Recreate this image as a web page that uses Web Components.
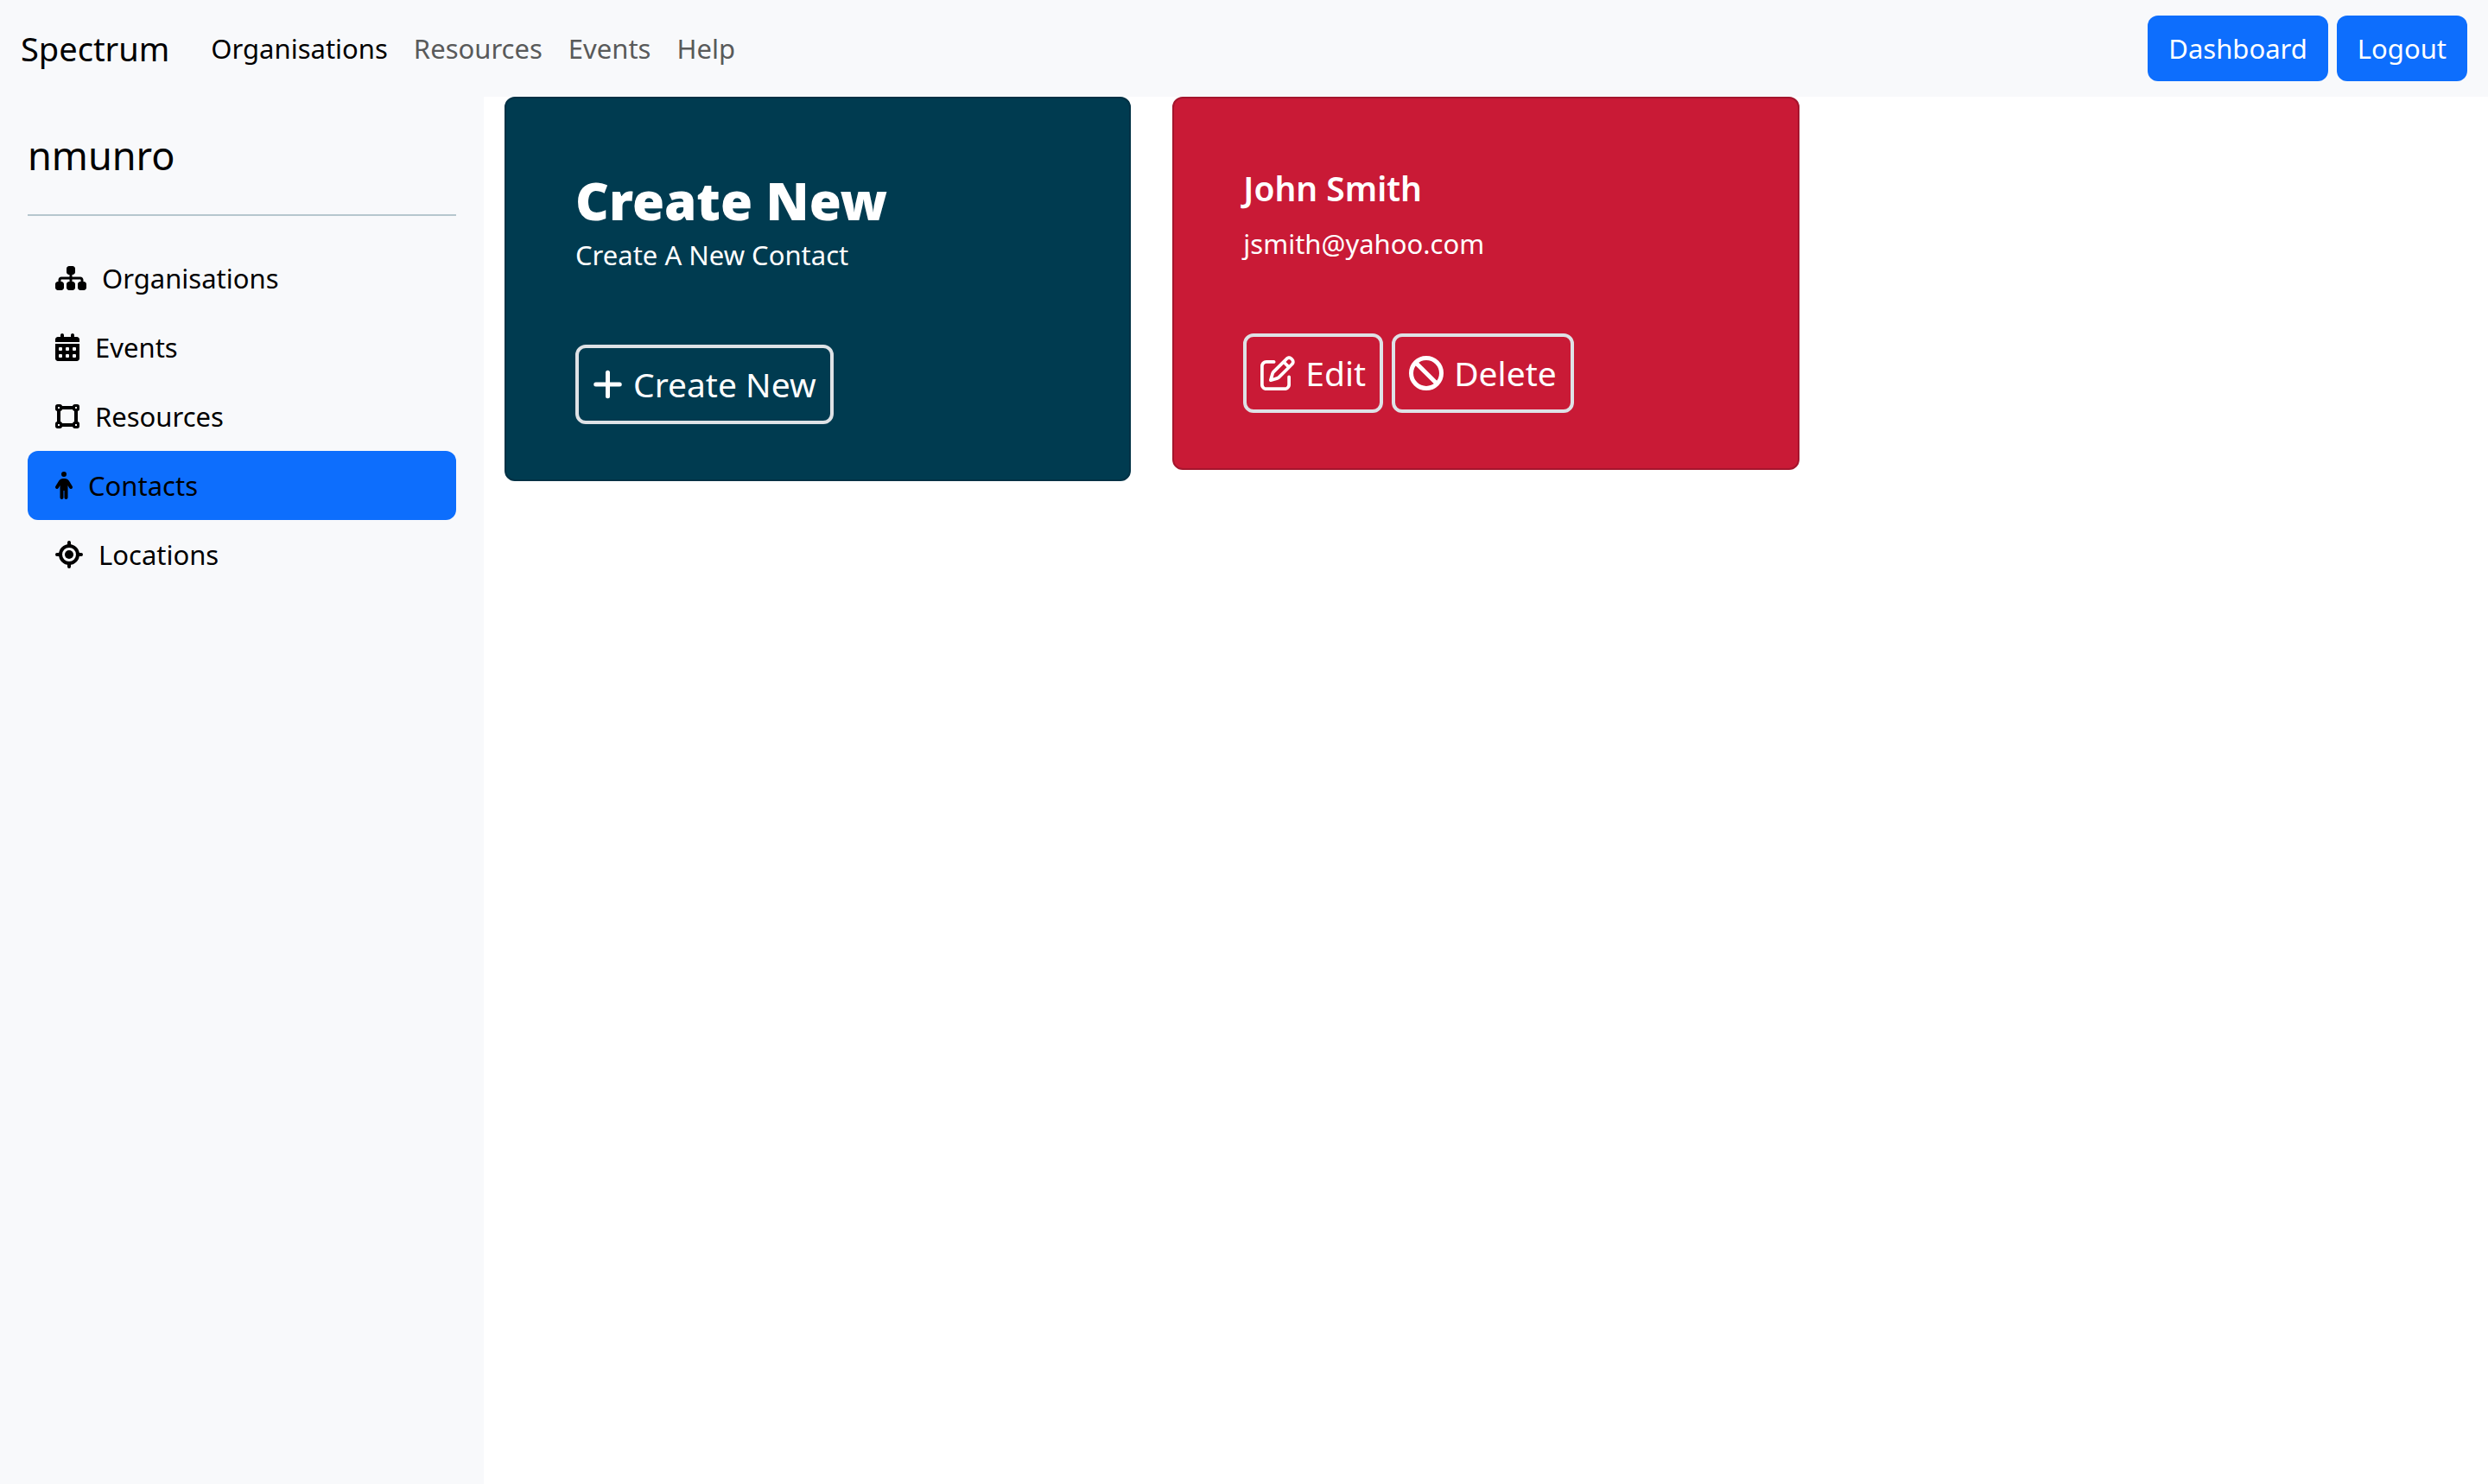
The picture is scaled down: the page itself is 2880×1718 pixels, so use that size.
<!DOCTYPE html>
<html lang="en">
<head>
<meta charset="utf-8">
<title>Spectrum</title>
<style>
  body { margin: 0; background: #fff; color: #000; font: 31px/48px "Noto Sans", "Open Sans", sans-serif; }
</style>
</head>
<body>
<spectrum-app>
  <spectrum-navbar slot="navbar">
    <nav-link active>Organisations</nav-link>
    <nav-link>Resources</nav-link>
    <nav-link>Events</nav-link>
    <nav-link>Help</nav-link>
    <action-button slot="actions">Dashboard</action-button>
    <action-button slot="actions">Logout</action-button>
  </spectrum-navbar>
  <spectrum-sidebar slot="sidebar" user="nmunro">
    <sidebar-item icon="sitemap">Organisations</sidebar-item>
    <sidebar-item icon="calendar">Events</sidebar-item>
    <sidebar-item icon="square">Resources</sidebar-item>
    <sidebar-item icon="person" active>Contacts</sidebar-item>
    <sidebar-item icon="crosshairs">Locations</sidebar-item>
  </spectrum-sidebar>
  <contact-card variant="create">
    <span slot="title">Create New</span>
    Create A New Contact
    <outline-button slot="actions" icon="plus">Create New</outline-button>
  </contact-card>
  <contact-card>
    <span slot="title">John Smith</span>
    jsmith@yahoo.com
    <outline-button slot="actions" icon="edit">Edit</outline-button>
    <outline-button slot="actions" icon="ban">Delete</outline-button>
  </contact-card>
</spectrum-app>

<script>
const ICONS = {
  sitemap: [576, '<path d="M208 80c0-26.5 21.5-48 48-48l64 0c26.5 0 48 21.5 48 48l0 64c0 26.5-21.5 48-48 48l-8 0 0 40 152 0c30.9 0 56 25.1 56 56l0 32 8 0c26.5 0 48 21.5 48 48l0 64c0 26.5-21.5 48-48 48l-64 0c-26.5 0-48-21.5-48-48l0-64c0-26.5 21.5-48 48-48l8 0 0-32c0-4.4-3.6-8-8-8l-152 0 0 40 8 0c26.5 0 48 21.5 48 48l0 64c0 26.5-21.5 48-48 48l-64 0c-26.5 0-48-21.5-48-48l0-64c0-26.5 21.5-48 48-48l8 0 0-40-152 0c-4.4 0-8 3.6-8 8l0 32 8 0c26.5 0 48 21.5 48 48l0 64c0 26.5-21.5 48-48 48l-64 0c-26.5 0-48-21.5-48-48l0-64c0-26.5 21.5-48 48-48l8 0 0-32c0-30.9 25.1-56 56-56l152 0 0-40-8 0c-26.5 0-48-21.5-48-48l0-64z"/>'],
  calendar: [448, '<path fill-rule="evenodd" d="M128 0c17.7 0 32 14.3 32 32l0 32 128 0 0-32c0-17.7 14.3-32 32-32s32 14.3 32 32l0 32 48 0c26.5 0 48 21.5 48 48l0 48L0 160l0-48C0 85.5 21.5 64 48 64l48 0 0-32c0-17.7 14.3-32 32-32zM0 192l448 0 0 272c0 26.5-21.5 48-48 48L48 512c-26.5 0-48-21.5-48-48L0 192zM80 256q-16 0-16 16v32q0 16 16 16h32q16 0 16-16v-32q0-16-16-16zM208 256q-16 0-16 16v32q0 16 16 16h32q16 0 16-16v-32q0-16-16-16zM336 256q-16 0-16 16v32q0 16 16 16h32q16 0 16-16v-32q0-16-16-16zM80 384q-16 0-16 16v32q0 16 16 16h32q16 0 16-16v-32q0-16-16-16zM208 384q-16 0-16 16v32q0 16 16 16h32q16 0 16-16v-32q0-16-16-16zM336 384q-16 0-16 16v32q0 16 16 16h32q16 0 16-16v-32q0-16-16-16z"/>'],
  square: [448, '<g fill="none" stroke="currentColor"><path stroke-width="64" d="M120 96H328M384 152V360M328 416H120M64 360V152"/><g stroke-width="48"><rect x="24" y="56" width="80" height="80" rx="20"/><rect x="344" y="56" width="80" height="80" rx="20"/><rect x="24" y="376" width="80" height="80" rx="20"/><rect x="344" y="376" width="80" height="80" rx="20"/></g></g>'],
  person: [320, '<path d="M112 48a48 48 0 1 1 96 0 48 48 0 1 1-96 0zm40 304l0 128c0 17.7-14.3 32-32 32s-32-14.3-32-32l0-223.1L59.4 304.5c-9.1 15.1-28.8 20-43.9 10.9s-20-28.8-10.9-43.9l58.3-97c17.4-28.9 48.6-46.6 82.3-46.6l29.7 0c33.7 0 64.9 17.7 82.3 46.6l58.3 97c9.1 15.1 4.2 34.8-10.9 43.9s-34.8 4.2-43.9-10.9L232 256.9 232 480c0 17.7-14.3 32-32 32s-32-14.3-32-32l0-128-16 0z"/>'],
  crosshairs: [512, '<g fill="none" stroke="currentColor" stroke-width="64" stroke-linecap="round"><circle cx="256" cy="256" r="160"/><path d="M256 32V80M256 432V480M32 256H80M432 256H480"/></g><circle cx="256" cy="256" r="80"/>'],
  plus: [448, '<path fill="none" stroke="currentColor" stroke-width="64" stroke-linecap="round" d="M224 80V432M48 256H400"/>'],
  edit: [512, '<path d="M441 58.9L453.1 71c9.4 9.4 9.4 24.6 0 33.9L424 134.1 377.9 88 407 58.9c9.4-9.4 24.6-9.4 33.9 0zM209.8 256.2L344 121.9 390.1 168 255.8 302.2c-2.9 2.9-6.5 5-10.4 6.1l-58.5 16.7 16.7-58.5c1.1-3.9 3.2-7.5 6.1-10.4zM373.1 25L175.8 222.2c-8.7 8.7-15 19.4-18.3 31.1l-28.6 100c-2.4 8.4-.1 17.4 6.1 23.6s15.2 8.5 23.6 6.1l100-28.6c11.8-3.4 22.5-9.7 31.1-18.3L487 138.9c28.1-28.1 28.1-73.7 0-101.8L474.9 25C446.8-3.1 401.2-3.1 373.1 25zM88 64C39.4 64 0 103.4 0 152L0 424c0 48.6 39.4 88 88 88l272 0c48.6 0 88-39.4 88-88l0-112c0-13.3-10.7-24-24-24s-24 10.7-24 24l0 112c0 22.1-17.9 40-40 40L88 464c-22.1 0-40-17.9-40-40l0-272c0-22.1 17.9-40 40-40l112 0c13.3 0 24-10.7 24-24s-10.7-24-24-24L88 64z"/>'],
  ban: [512, '<g fill="none" stroke="currentColor" stroke-width="64"><circle cx="256" cy="256" r="224"/><path d="M98 98L414 414"/></g>'],
};

function icon(name) {
  const [width, shape] = ICONS[name];
  return `<svg viewBox="0 0 ${width} 512" fill="currentColor" aria-hidden="true">${shape}</svg>`;
}

function define(name, render) {
  customElements.define(name, class extends HTMLElement {
    connectedCallback() {
      if (!this.shadowRoot) this.attachShadow({ mode: 'open' }).innerHTML = render(this);
    }
  });
}

define('spectrum-app', () => `
  <style>
    :host { display: flex; flex-direction: column; min-height: 100vh; }
    .body { display: grid; grid-template-columns: 560px 1fr; flex: 1; }
    main { display: grid; grid-template-columns: repeat(3, 1fr); gap: 48px; align-items: start; align-content: start; padding: 0 24px; }
  </style>
  <slot name="navbar"></slot>
  <div class="body"><slot name="sidebar"></slot><main><slot></slot></main></div>`);

define('spectrum-navbar', () => `
  <style>
    :host { display: block; background: #f8f9fb; }
    header { display: flex; align-items: center; padding: 18px 24px; gap: 48px; }
    .brand { color: #000; font-size: 38px; text-decoration: none; }
    nav { display: flex; gap: 30px; flex: 1; }
    .actions { display: flex; gap: 10px; }
  </style>
  <header>
    <a class="brand" href="#">Spectrum</a>
    <nav><slot></slot></nav>
    <div class="actions"><slot name="actions"></slot></div>
  </header>`);

define('nav-link', () => `
  <style>
    :host { display: block; }
    a { color: #595a5a; text-decoration: none; }
    :host([active]) a { color: #000; }
  </style>
  <a href="#"><slot></slot></a>`);

define('action-button', () => `
  <style>
    :host { display: block; }
    button { display: block; border: 0; border-radius: 12px; padding: 14px 24px; background: #0d6efd; color: #fff; font: inherit; }
  </style>
  <button type="button"><slot></slot></button>`);

define('spectrum-sidebar', el => `
  <style>
    :host { display: block; background: #f8f9fb; padding: 32px; }
    .user { display: block; color: #000; font-size: 45px; line-height: 72px; text-decoration: none; }
    hr { height: 2px; margin: 32px 0; border: 0; background: #b6c7ce; }
    nav { display: flex; flex-direction: column; }
  </style>
  <a class="user" href="#">${el.getAttribute('user')}</a>
  <hr>
  <nav><slot></slot></nav>`);

define('sidebar-item', el => `
  <style>
    :host { display: block; }
    a { display: flex; align-items: center; gap: 18px; padding: 16px 32px; border-radius: 12px; color: #000; text-decoration: none; }
    :host([active]) a { background: #0d6efd; }
    svg { height: 32px; }
  </style>
  <a href="#">${icon(el.getAttribute('icon'))}<span><slot></slot></span></a>`);

define('contact-card', () => `
  <style>
    :host { display: block; box-sizing: border-box; border: 2px solid #a5152d; border-radius: 12px; padding: 80px 80px 64px; background: #c91a36; color: #fff; }
    :host([variant="create"]) { background: #003b50; border-color: #003145; }
    h2 { margin: 0 0 16px; font-size: 39px; font-weight: 600; line-height: 48px; }
    :host([variant="create"]) h2 { margin: 0; font-size: 60px; font-weight: 900; line-height: 77px; }
    p { margin: 0 0 80px; }
    .actions { display: flex; gap: 10px; }
  </style>
  <h2><slot name="title"></slot></h2>
  <p><slot></slot></p>
  <div class="actions"><slot name="actions"></slot></div>`);

define('outline-button', el => `
  <style>
    :host { display: block; }
    button { display: flex; align-items: center; gap: 12px; border: 4px solid #dee2e6; border-radius: 12px; padding: 12px 16px; background: transparent; color: #fff; font: inherit; font-size: 39px; line-height: 60px; }
    svg { height: 40px; }
  </style>
  <button type="button">${icon(el.getAttribute('icon'))}<span><slot></slot></span></button>`);
</script>
</body>
</html>
